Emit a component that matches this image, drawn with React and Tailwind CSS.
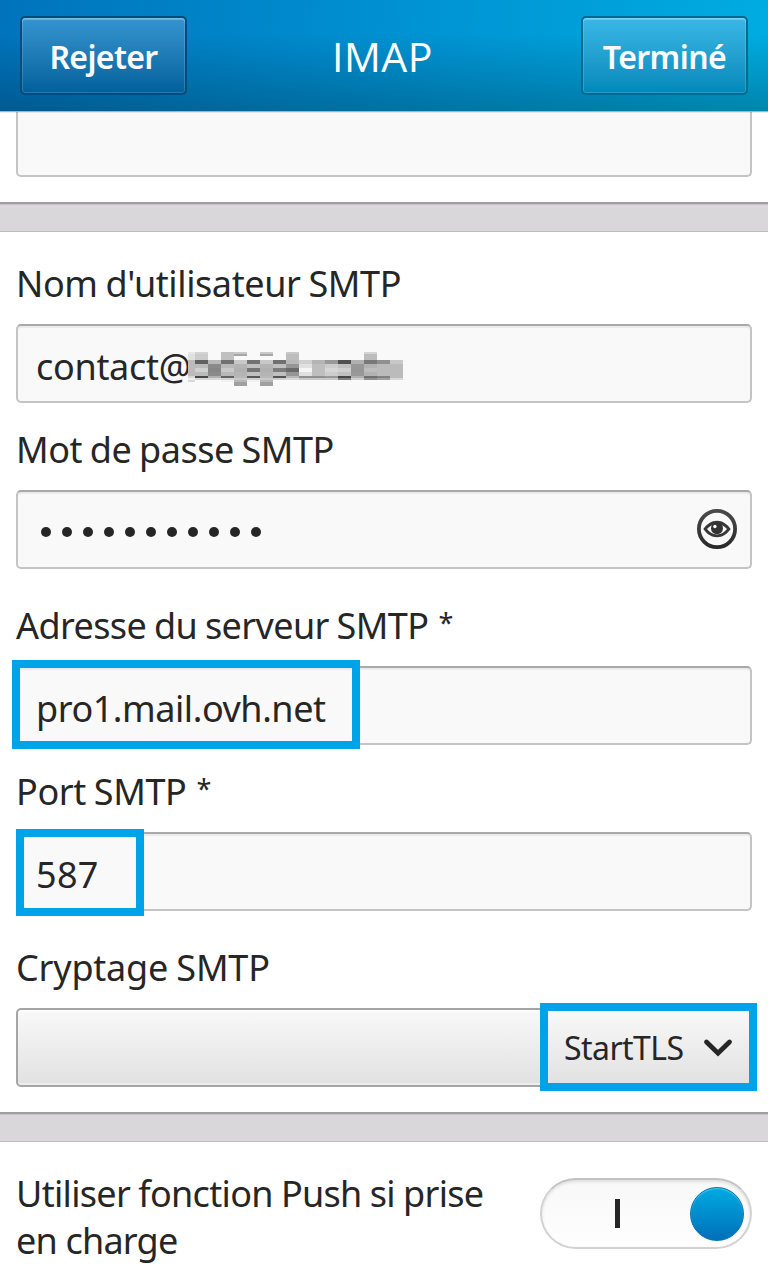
const MOSAIC_ROWS = [[0, 2], [2, 6], [8, 4], [12, 4], [16, 4], [20, 4], [24, 2], [26, 2], [28, 2], [30, 4]];
const MOSAIC_COLS = [
  'e8 e0 bb bb bb bb d8 ee d8 --',
  'd4 cc 60 bb d0 bb 46 d8 -- --',
  '-- -- b8 8a 86 8a b0 d8 -- --',
  'c0 c0 70 b8 c8 b8 62 d4 f2 --',
  'c8 -- c8 b4 b0 b4 b8 c8 b8 a0',
  '-- -- 72 c0 74 c0 58 d0 f2 --',
  'c8 -- c8 b4 b0 b4 b8 c8 b8 a0',
  '-- -- 70 c0 7c c0 54 d0 -- --',
  'c8 bd b8 96 6a 96 b8 d8 -- --',
  '-- -- d0 e0 f5 e0 90 c8 -- --',
  '-- -- b4 be be be 90 c8 -- --',
  '-- -- 98 cc d6 cc 98 c8 -- --',
  '-- -- 50 c0 d0 c0 46 80 -- --',
  '-- -- b0 98 96 98 b0 d0 -- --',
  'd4 bd 78 b2 bd b2 70 90 -- --',
  '-- -- 90 bb bb bb 80 a0 -- --',
  '-- -- c8 bb bb bb bb d8 -- --',
];

function Mosaic() {
  return (
    <svg className="absolute left-[170px] top-[26px] bg-[#f9f9f9]" width="216" height="34" shapeRendering="crispEdges" aria-hidden="true">
      {MOSAIC_COLS.map((col, c) =>
        col.split(' ').map((v, r) =>
          v === '--' ? null : (
            <rect
              key={`${c}-${r}`}
              x={c === 0 ? 0 : 7 + (c - 1) * 13}
              y={MOSAIC_ROWS[r][0]}
              width={c === 0 ? 7 : 13}
              height={MOSAIC_ROWS[r][1]}
              fill={`#${v}${v}${v}`}
            />
          )
        )
      )}
      <path d="M46 2h13v2h-13zM72 2h13v2h-13z" fill="#a6a6a6" />
    </svg>
  );
}

function EyeIcon() {
  return (
    <svg width="42" height="42" viewBox="0 0 42 42" fill="none" aria-hidden="true">
      <defs>
        <linearGradient id="eye" x1="0" y1="0" x2="0" y2="1">
          <stop offset="0" stopColor="#4a4a4a" />
          <stop offset="1" stopColor="#2a2a2a" />
        </linearGradient>
      </defs>
      <circle cx="21" cy="21" r="18.1" stroke="url(#eye)" strokeWidth="3.8" />
      <path
        fillRule="evenodd"
        fill="#383838"
        d="M7.3 21C11 16 15.5 12.8 21 12.8S31 16 34.7 21C31 26.2 26.5 29.2 21 29.2S11 26.2 7.3 21ZM11 21C13.7 24.5 17 26.4 21 26.4S28.3 24.5 31 21C28.3 17.8 25 16.2 21 16.2S13.7 17.8 11 21Z"
      />
      <circle cx="21" cy="20.3" r="6" fill="#333333" />
      <circle cx="18.9" cy="18.5" r="1.7" fill="#ffffff" />
    </svg>
  );
}

function HeaderButton({ children, className }) {
  return (
    <button
      className={`flex h-[79px] w-[167px] items-center justify-center rounded-[5px] border-2 bg-linear-to-b pt-[3px] text-[32px] font-semibold text-[#fafafa] shadow-[inset_0_2px_0_rgba(255,255,255,0.25),inset_0_0_0_1px_rgba(255,255,255,0.15)] ${className}`}
    >
      {children}
    </button>
  );
}

function Label({ children, required = false, className }) {
  return (
    <div className={`h-12 pl-4 whitespace-nowrap leading-[48px] ${className}`}>
      {children}
      {required && <span className="relative -top-[6px] ml-[10px] text-[27px] leading-none tracking-normal">*</span>}
    </div>
  );
}

function Field({ children, className = '' }) {
  return (
    <div
      className={`relative mx-4 flex h-[79px] items-start rounded-[5px] border-2 border-[#c4c4c4] border-t-[#a9a9a9] bg-[#f9f9f9] pt-[17px] pl-[18px] leading-[48px] shadow-[inset_0_2px_1px_rgba(0,0,0,0.06)] ${className}`}
    >
      {children}
    </div>
  );
}

function Divider() {
  return <div className="h-[30px] shrink-0 border-t-2 border-b border-t-[#9f9f9f] border-b-[#bdbdbd] bg-[#d9d7d9] shadow-[inset_0_1px_0_#c6c5c6]" />;
}

export default function App() {
  return (
    <div className="flex h-[1280px] w-[768px] flex-col overflow-hidden bg-white font-['Noto_Sans','Open_Sans',sans-serif] text-[36px] text-[#262626]">
      <header className="relative z-10 flex h-[111px] shrink-0 items-start justify-between bg-[linear-gradient(to_bottom,transparent_30%,rgba(0,0,0,0.23)),linear-gradient(100deg,#0073bc,#0091d2_50%,#00ade2)] px-5 pt-4 shadow-[0_1px_0_#b0b0b0,0_2px_0_rgba(0,0,0,0.08)]">
        <HeaderButton className="border-[#004c7c] from-[#3595d0] to-[#00619c] tracking-[-0.65px]">Rejeter</HeaderButton>
        <h1 className="-ml-[3px] pt-3 font-['Open_Sans',sans-serif] text-[41px] font-medium leading-[56px] tracking-[0.5px] text-white">IMAP</h1>
        <HeaderButton className="border-[#006a93] from-[#38b8e8] to-[#0089b9] tracking-[-0.6px]">Terminé</HeaderButton>
      </header>

      <section className="h-[91px] shrink-0">
        <Field className="-mt-[13px]" />
      </section>
      <Divider />

      <section className="h-[880px] shrink-0 pt-7">
        <Label className="tracking-[-0.4px] [word-spacing:-1px]">Nom d'utilisateur SMTP</Label>
        <Field className="mt-4">
          <span className="tracking-[-0.3px]">contact@</span>
          <Mosaic />
        </Field>

        <Label className="mt-[23px] tracking-[-0.5px] [word-spacing:-1px]">Mot de passe SMTP</Label>
        <Field className="mt-4">
          <div className="mt-[18px] ml-[5px] flex gap-[11px]" aria-label="Mot de passe masqué">
            {Array.from({ length: 11 }, (_, i) => (
              <span key={i} className="size-[10px] rounded-full bg-[#262626]" />
            ))}
          </div>
          <button className="-mt-px mr-[12px] ml-auto">
            <EyeIcon />
          </button>
        </Field>

        <Label required className="mt-[33px] tracking-[-0.6px] [word-spacing:-1px]">Adresse du serveur SMTP</Label>
        <Field className="mt-4">
          <span className="tracking-[-0.45px]">pro1.mail.ovh.net</span>
          <div className="absolute -top-[8px] -left-[6px] h-[89px] w-[348px] border-8 border-[#00a2e8]" />
        </Field>

        <Label required className="mt-[23px] tracking-[-0.4px] [word-spacing:-1px]">Port SMTP</Label>
        <Field className="mt-4">
          <span className="tracking-[0.3px]">587</span>
          <div className="absolute -top-[5px] -left-[2px] h-[87px] w-[128px] border-8 border-[#00a2e8]" />
        </Field>

        <Label className="mt-[33px] tracking-[-0.2px] [word-spacing:-1px]">Cryptage SMTP</Label>
        <div className="relative mx-4 mt-4 flex h-[79px] items-center rounded-[5px] border-2 border-[#a5a5a5] bg-linear-to-b from-[#f9f9f9] to-[#e1e1e1] pl-[546px] text-[32px] leading-[44px] shadow-[inset_0_2px_0_rgba(255,255,255,0.6),inset_0_-2px_0_rgba(255,255,255,0.4)]">
          <span className="tracking-[-0.55px]">StartTLS</span>
          <svg className="absolute left-[685px] top-[27px]" width="30" height="22" viewBox="0 0 30 22" fill="none" aria-hidden="true">
            <path d="M3.5 5L15 16.2L26.5 5" stroke="#262626" strokeWidth="4.8" strokeLinecap="round" />
          </svg>
          <div className="absolute -top-[7px] left-[522px] h-[88px] w-[217px] border-8 border-[#00a2e8]" />
        </div>
      </section>
      <Divider />

      <section className="flex flex-1 justify-between pt-[27px] pr-4 pl-4">
        <p className="pt-px leading-[47px] whitespace-nowrap">
          <span className="tracking-[-0.68px] [word-spacing:-0.6px]">Utiliser fonction Push si prise</span>
          <br />
          <span className="tracking-[-0.8px]">en charge</span>
        </p>
        <div className="relative mt-[9px] h-[71px] w-[212px] rounded-full border-2 border-[#d2d2d2] border-t-[#c2c2c2] bg-linear-to-b from-[#f8f8f8] to-[#fefefe] shadow-[inset_0_2px_3px_rgba(0,0,0,0.1)]">
          <span className="absolute left-[73px] top-[19px] h-[29px] w-[5px] bg-[#262626]" />
          <span className="absolute left-[148px] top-[7px] size-[54px] rounded-full border border-[#0075b8] bg-linear-to-b from-[#00abe0] to-[#006fba] shadow-[inset_0_1px_1px_rgba(255,255,255,0.35)]" />
        </div>
      </section>
    </div>
  );
}
